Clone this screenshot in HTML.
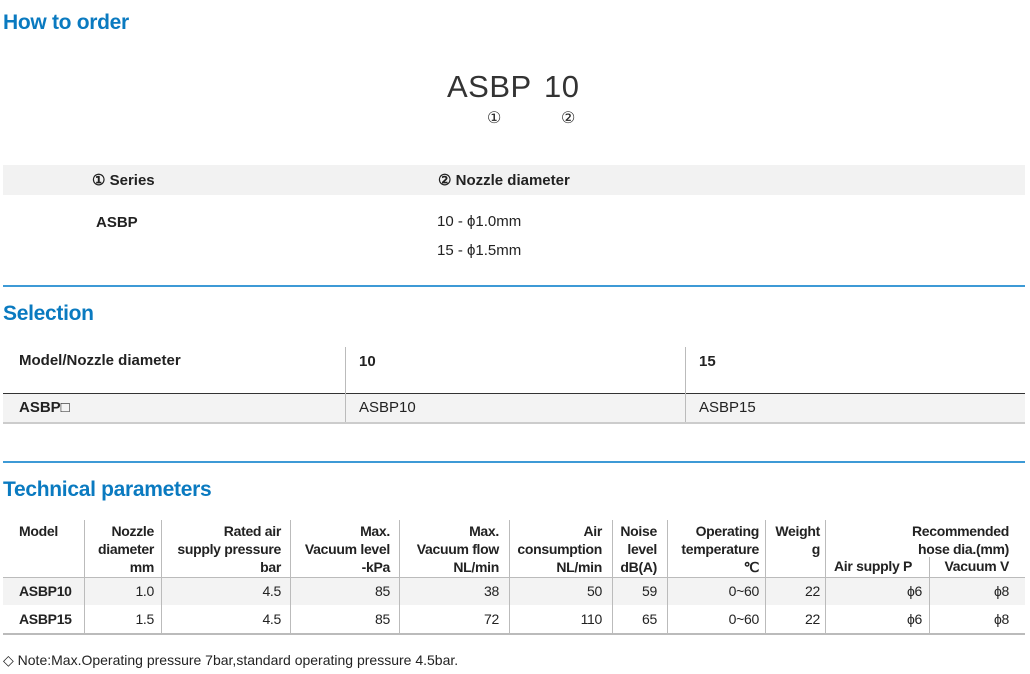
<!DOCTYPE html>
<html><head><meta charset="utf-8"><style>
*{margin:0;padding:0;box-sizing:border-box}
body{width:1030px;height:674px;background:#fff;position:relative;overflow:hidden;font-family:"Liberation Sans",sans-serif;color:#222;font-size:15px}
.a{position:absolute;white-space:nowrap}
h2{position:absolute;left:3px;font-family:"Liberation Sans",sans-serif;font-size:21px;color:#0a7ac0;font-weight:bold;letter-spacing:-0.3px}
.b{font-weight:bold}
.line{position:absolute;left:3px;width:1022px;height:1px}
.v{position:absolute;width:1px;background:#bbb}
.r{text-align:right}
.t{font-size:14px;letter-spacing:-0.3px}
</style></head><body>
<h2 style="top:11px">How to order</h2>
<div class="a" style="left:447px;top:69px;font-size:31px;color:#333;letter-spacing:0.5px">ASBP</div>
<div class="a" style="left:544px;top:69px;font-size:31px;color:#333;letter-spacing:0.5px">10</div>
<div class="a" style="left:487px;top:108px;font-size:16px">①</div>
<div class="a" style="left:561px;top:108px;font-size:16px">②</div>
<div class="a" style="left:3px;top:165px;width:1022px;height:30px;background:#f2f2f2"></div>
<div class="a b" style="left:92px;top:171px;font-size:15px">① Series</div>
<div class="a b" style="left:438px;top:171px;font-size:15px">② Nozzle diameter</div>
<div class="a b" style="left:96px;top:214px">ASBP</div>
<div class="a" style="left:437px;top:213px">10 - ϕ1.0mm</div>
<div class="a" style="left:437px;top:242px">15 - ϕ1.5mm</div>
<div class="line" style="top:285px;background:#3d9ad6;height:1.5px"></div>

<h2 style="top:302px">Selection</h2>
<div class="a b" style="left:19px;top:352px">Model/Nozzle diameter</div>
<div class="a b" style="left:359px;top:353px">10</div>
<div class="a b" style="left:699px;top:353px">15</div>
<div class="line" style="top:393px;background:#333"></div>
<div class="a" style="left:3px;top:394px;width:1022px;height:28px;background:#f3f3f3"></div>
<div class="v" style="left:345px;top:347px;height:76px"></div>
<div class="v" style="left:685px;top:347px;height:76px"></div>
<div class="a b" style="left:19px;top:399px">ASBP□</div>
<div class="a" style="left:359px;top:399px">ASBP10</div>
<div class="a" style="left:699px;top:399px">ASBP15</div>
<div class="line" style="top:422px;background:#ccc;height:2px"></div>
<div class="line" style="top:461px;background:#3d9ad6;height:1.5px"></div>

<h2 style="top:478px">Technical parameters</h2>
<div class="t">
<div class="a" style="left:3px;top:577px;width:1022px;height:28px;background:#f3f3f3"></div>
<div class="line" style="top:577px;background:#bbb"></div>
<div class="line" style="top:633px;background:#bbb;height:2px"></div>
<div class="v" style="left:84px;top:520px;height:113px"></div>
<div class="v" style="left:161px;top:520px;height:113px"></div>
<div class="v" style="left:290px;top:520px;height:113px"></div>
<div class="v" style="left:399px;top:520px;height:113px"></div>
<div class="v" style="left:509px;top:520px;height:113px"></div>
<div class="v" style="left:612px;top:520px;height:113px"></div>
<div class="v" style="left:667px;top:520px;height:113px"></div>
<div class="v" style="left:765px;top:520px;height:113px"></div>
<div class="v" style="left:825px;top:520px;height:113px"></div>
<div class="v" style="left:929px;top:557px;height:76px"></div>
<div class="a b" style="left:19px;top:522px;line-height:18px">Model</div>
<div class="a b r" style="right:876px;top:522px;line-height:18px">Nozzle<br>diameter<br>mm</div>
<div class="a b r" style="right:749px;top:522px;line-height:18px">Rated air<br>supply pressure<br>bar</div>
<div class="a b r" style="right:640px;top:522px;line-height:18px">Max.<br>Vacuum level<br>-kPa</div>
<div class="a b r" style="right:531px;top:522px;line-height:18px">Max.<br>Vacuum flow<br>NL/min</div>
<div class="a b r" style="right:428px;top:522px;line-height:18px">Air<br>consumption<br>NL/min</div>
<div class="a b r" style="right:373px;top:522px;line-height:18px">Noise<br>level<br>dB(A)</div>
<div class="a b r" style="right:271px;top:522px;line-height:18px">Operating<br>temperature<br>℃</div>
<div class="a b r" style="right:210px;top:522px;line-height:18px">Weight<br>g</div>
<div class="a b r" style="right:21px;top:522px;line-height:18px">Recommended<br>hose dia.(mm)</div>
<div class="a b" style="left:834px;top:558px">Air supply P</div>
<div class="a b r" style="right:21px;top:558px">Vacuum V</div>
<div class="a b" style="left:19px;top:583px">ASBP10</div>
<div class="a b" style="left:19px;top:611px">ASBP15</div>
<div class="a r" style="right:876px;top:583px">1.0</div><div class="a r" style="right:876px;top:611px">1.5</div>
<div class="a r" style="right:749px;top:583px">4.5</div><div class="a r" style="right:749px;top:611px">4.5</div>
<div class="a r" style="right:640px;top:583px">85</div><div class="a r" style="right:640px;top:611px">85</div>
<div class="a r" style="right:531px;top:583px">38</div><div class="a r" style="right:531px;top:611px">72</div>
<div class="a r" style="right:428px;top:583px">50</div><div class="a r" style="right:428px;top:611px">110</div>
<div class="a r" style="right:373px;top:583px">59</div><div class="a r" style="right:373px;top:611px">65</div>
<div class="a r" style="right:271px;top:583px">0~60</div><div class="a r" style="right:271px;top:611px">0~60</div>
<div class="a r" style="right:210px;top:583px">22</div><div class="a r" style="right:210px;top:611px">22</div>
<div class="a r" style="right:108px;top:583px">ϕ6</div><div class="a r" style="right:108px;top:611px">ϕ6</div>
<div class="a r" style="right:21px;top:583px">ϕ8</div><div class="a r" style="right:21px;top:611px">ϕ8</div>
</div>
<div class="a" style="left:3px;top:652px;font-size:14px">◇ Note:Max.Operating pressure 7bar,standard operating pressure 4.5bar.</div>
</body></html>
